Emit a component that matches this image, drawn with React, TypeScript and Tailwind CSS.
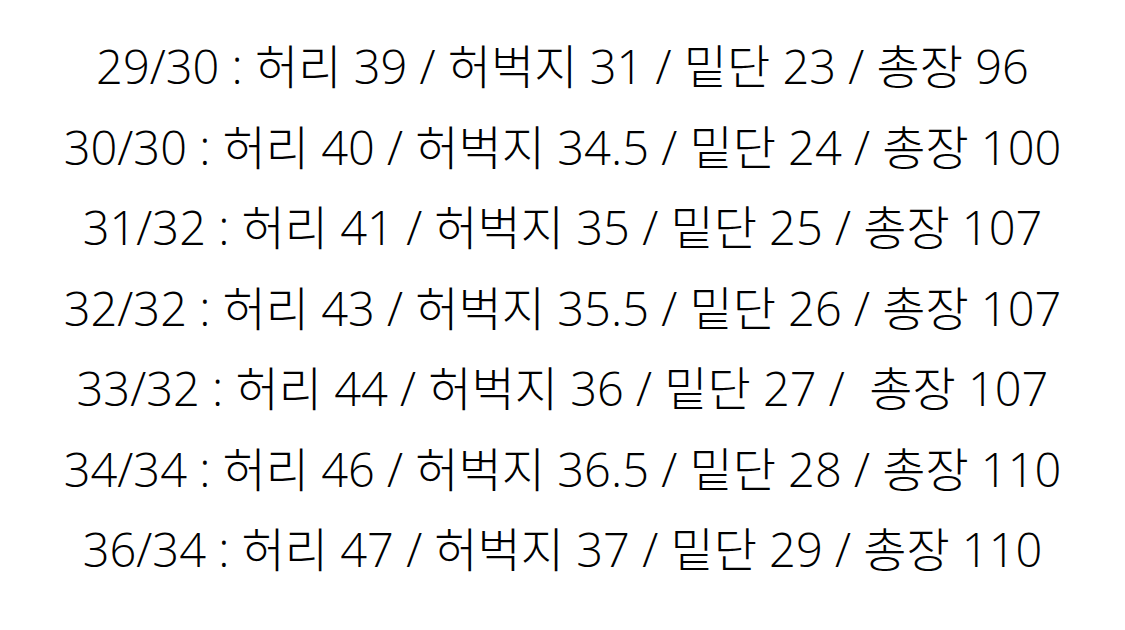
import React from 'react';

const rows = [
  '29/30 : 허리 39 / 허벅지 31 / 밑단 23 / 총장 96',
  '30/30 : 허리 40 / 허벅지 34.5 / 밑단 24 / 총장 100',
  '31/32 : 허리 41 / 허벅지 35 / 밑단 25 / 총장 107',
  '32/32 : 허리 43 / 허벅지 35.5 / 밑단 26 / 총장 107',
  '33/32 : 허리 44 / 허벅지 36 / 밑단 27 /  총장 107',
  '34/34 : 허리 46 / 허벅지 36.5 / 밑단 28 / 총장 110',
  '36/34 : 허리 47 / 허벅지 37 / 밑단 29 / 총장 110',
];

export default function App() {
  return (
    <div className="w-[1125px] h-[630px] bg-white flex flex-col items-center pt-[26px] font-['Open_Sans','Noto_Sans_CJK_KR',sans-serif] font-light text-[47px] leading-[80.5px] text-black">
      {rows.map((r) => (
        <div key={r} className="whitespace-pre">
          {r}
        </div>
      ))}
    </div>
  );
}
